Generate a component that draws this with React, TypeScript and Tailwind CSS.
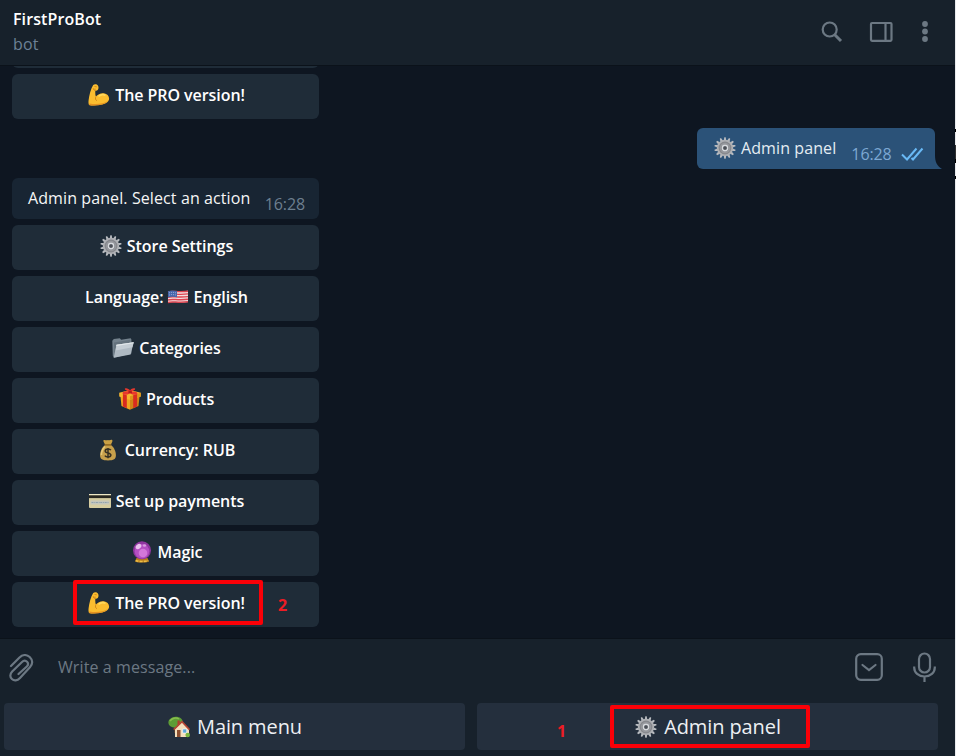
import React from 'react'

const Gear = () => (
  <svg width="22" height="22" viewBox="0 0 22 22">
    {Array.from({ length: 14 }, (_, i) => (
      <path key={i} d="M9.700 3.600 10.300.3h1.400l.6 3.300z" fill="#b9bcc1" transform={`rotate(${(i * 360) / 14} 11 11)`} />
    ))}
    <circle cx="11" cy="11" r="8.200" fill="#aeb0b4" />
    <circle cx="11" cy="11" r="6.400" fill="#85878c" />
    <circle cx="11" cy="11" r="5.200" fill="#96989d" />
    <circle cx="11" cy="11" r="3.600" fill="#696c72" />
    <circle cx="11" cy="11" r="2.700" fill="none" stroke="#d7dade" strokeWidth="1.400" />
    <circle cx="11" cy="11" r="1.500" fill="#4b5058" />
  </svg>
)

const Muscle = () => (
  <svg width="22" height="22" viewBox="0 0 22 22">
    <path
      d="M5.2.9C6.7-.2 9 .2 9.9 1.4c.8 1.2.8 3.2 0 4.4-.6.8-1.8 1-2.5.8-.3 2.2-.1 4.4.5 6 2-2.4 5-3.8 8-3.3 3.3.5 5.3 2.8 5.2 5.4-.2 3.4-4 5.4-8.3 6.1-4 .7-8.6.9-11.2.4C.5 20.9.3 18.7.6 16.3 1.1 11.2 2.8 4.8 5.2.9z"
      fill="#fbbd2f"
    />
    <path d="M1.5 19.4c6 1.3 14.5.6 18.7-2.7-1.9 3-8.2 4.700-13.500 4.700-2.500 0-5.300 0-5.700-1z" fill="#e39020" />
    <path d="M7.3 6.6c-1.2-.1-1.900-1-2-2 .8.8 1.800.7 2.600.5M7.900 12.600c-.9 1.700-.4 3.300.9 4.200M6.500 2.500l2.300.4" fill="none" stroke="#cf8519" strokeWidth=".9" />
    <path d="M10.5 12.3c2-1.600 5-2.100 7-.9" fill="none" stroke="#ffd85c" strokeWidth="1.600" />
  </svg>
)

const Flag = () => (
  <svg width="22" height="22" viewBox="0 0 22 22">
    <path d="M1 5.500c5-1.700 9 .8 20-.7v11.200c-9 1.800-14-.8-20 .8z" fill="#f0dfe0" />
    <path
      d="M1 5.900c5-1.700 9 .8 20-.7M1 8.600c5-1.700 9 .8 20-.7M1 11.300c5-1.700 9 .8 20-.7M1 14c5-1.700 9 .8 20-.7M1 16.500c5-1.700 9 .8 20-.7"
      stroke="#dc4450"
      strokeWidth="1.400"
      fill="none"
    />
    <path d="M1 5.300c3.300-1.200 6-.6 9-.3v6.200c-3-.6-6-.8-9 .2z" fill="#4666ab" />
    <path d="M2 6.900c3-1 5-.4 7.500 0M2 9.100c3-1 5-.4 7.500 0" stroke="#b9c7e6" strokeWidth=".7" strokeDasharray="1 1" fill="none" />
  </svg>
)

const Folder = () => (
  <svg width="22" height="22" viewBox="0 0 22 22">
    <path d="M.3 3.800 1.800 2.100l6-.9 1.400 1.500 9.400-1.500.8 1.200v14L2 20.800.8 19z" fill="#74828d" />
    <path d="M2 5.500 18.400 2.700v11L2.400 18z" fill="#64727d" />
    <path d="M4.500 7.800 21.700 5.200 18.600 17.400 1.700 20.800z" fill="#aeb9c2" />
    <path d="M4.500 7.800 21.700 5.200l-1.300 5L3.600 13.500z" fill="#c4cdd4" />
    <path d="M4.500 7.800 21.700 5.200l-.2 1L4.300 8.900z" fill="#e3e8eb" />
  </svg>
)

const Gift = () => (
  <svg width="22" height="22" viewBox="0 0 22 22">
    <path d="M1.300 7 11 10v11.700L2.500 18z" fill="#f2a51f" />
    <path d="M20.700 7 11 10v11.700l8.500-3.700z" fill="#d08417" />
    <path d="M.2 4.700 11 2l10.800 2.700v3.700L11 11.800.2 8.400z" fill="#f5b52d" />
    <path d="m11 8.200 10.800-3.500v3.700L11 11.800z" fill="#dc951b" />
    <path d="m3.900 5.900 3.900 1.300v13.100l-3.900-1.700zM18.100 5.900l-3.900 1.300v13.100l3.900-1.700z" fill="#d92b20" />
    <path d="M11 5.200C8 7.300 4.300 7.400 3.500 5.300 3.100 3.600 7.500 3 10 3.600 8 2.500 5 1.500 6 .5 7.400-.4 10 .8 11 2.400 12.200.7 15-.4 16 .6c.9 1-1.700 2-3.700 3 2.700-.5 6.700.2 6.200 1.900-.8 2-4.800 1.600-7.500-.3z" fill="#e8382d" />
    <path d="m9.600 2.600 3-.1.500 2.700-3.700.1z" fill="#b51b1d" />
  </svg>
)

const MoneyBag = () => (
  <svg width="22" height="22" viewBox="0 0 22 22">
    <path d="M7.200 6C6.500 4 4.800 2 5.500 1.200 7 .4 8 2 10 1c1.900.9 3-.8 4.300.2.700.8-.8 2.800-1.500 4.800z" fill="#c9a044" />
    <path d="M7 6h6c3 2.300 5 6.700 4.900 10.500-.1 3.600-2.200 4.900-7.900 4.900s-7.800-1.300-7.900-4.900C2 12.700 4 8.300 7 6z" fill="#c7a04b" />
    <path d="M7 7.500c-2 2-3.600 5.500-3.600 8.400" stroke="#e7c979" strokeWidth="1.600" fill="none" />
    <path d="M6.600 5.900h6.800" stroke="#8c6520" strokeWidth="1.500" />
    <path d="M12.900 11.200c-1.200-1.800-5.700-1.700-5.700.8 0 2.600 5.700 1.500 5.700 4.100 0 2.400-4.900 2.500-6 .5M10 9v10.300" stroke="#363023" strokeWidth="1.500" fill="none" />
  </svg>
)

const Card = () => (
  <svg width="22" height="22" viewBox="0 0 22 22">
    <rect y="4" width="22" height="14" rx="1" fill="#d6cda0" />
    <rect y="4" width="22" height="1.500" fill="#eee8c5" />
    <rect y="5.300" width="22" height="2.800" fill="#29271f" />
    <rect x="1.500" y="10.500" width="19" height="4" fill="#c4c6bc" />
    <path d="M2.500 12.500h17" stroke="#8fa2ad" strokeWidth="1.200" strokeDasharray="2 .8 1 .6" />
  </svg>
)

const Crystal = () => (
  <svg width="22" height="22" viewBox="0 0 22 22">
    <path d="M5.500 17h11l1.500 3.400c-3 1.600-11 1.600-14 0z" fill="#b57a1d" />
    <circle cx="11" cy="9.300" r="9" fill="#8f369f" />
    <circle cx="11" cy="10.300" r="7.300" fill="#b44fc2" />
    <circle cx="12" cy="12" r="4.300" fill="#d377d9" />
    <ellipse cx="7.500" cy="5.500" rx="3.200" ry="2.300" fill="#e9c2ee" transform="rotate(-40 7.500 5.500)" />
    <ellipse cx="13.500" cy="4.500" rx="1.700" ry="1.200" fill="#d99be0" />
    <path d="M4.700 19.500c3.500 1.300 9 1.300 12.600 0" stroke="#edbf45" strokeWidth="1.700" fill="none" strokeDasharray="3 1" />
  </svg>
)

const House = () => (
  <svg width="22" height="22" viewBox="0 0 22 22">
    <path d="M6.500 8h2v9h-2z" fill="#7a4b25" />
    <path d="M.4 6.800C.2 3.900 3.400.9 7.500.8c4.200-.1 7.200 2 7.300 5.400.1 3-3.200 5.500-7.400 5.500S.6 9.700.4 6.800z" fill="#5d9c36" />
    <path d="M2 5c2-3 6-3.700 9-2.200" stroke="#87bd4d" strokeWidth="1.500" fill="none" />
    <path d="M9.500 4.500h2.200v5H9.500z" fill="#b23c2e" />
    <path d="M7 13 14 6l7 7v8H7z" fill="#f4dfbd" />
    <path d="M5.700 13.600 14 5.600l7.500 8" stroke="#b54534" strokeWidth="1.600" fill="none" />
    <path d="M9 14h3.500v7H9z" fill="#8c4e2e" />
    <path d="M14.700 13h4v4h-4z" fill="#5ca6d9" stroke="#fff" strokeWidth=".6" />
    <circle cx="19.700" cy="19" r="2.300" fill="#78b73f" />
  </svg>
)

interface ActionProps {
  icon?: React.ReactNode
  label: React.ReactNode
  children?: React.ReactNode
}

const Action = ({ icon, label, children }: ActionProps) => (
  <button
    type="button"
    className="relative flex h-[45px] w-full shrink-0 items-center justify-center gap-[5px] rounded-md bg-[#1f2c38] pb-[3px] pl-[2px] text-[16px] font-semibold tracking-[-0.06px] text-white">
    {icon}
    <span className="flex items-center gap-1 whitespace-nowrap">{label}</span>
    {children}
  </button>
)

const actions = [
  { id: 'settings', icon: <Gear />, label: 'Store Settings' },
  {
    id: 'language',
    label: (
      <>
        Language: <Flag /> English
      </>
    ),
  },
  { id: 'categories', icon: <Folder />, label: 'Categories' },
  { id: 'products', icon: <Gift />, label: 'Products' },
  { id: 'currency', icon: <MoneyBag />, label: 'Currency: RUB' },
  { id: 'payments', icon: <Card />, label: 'Set up payments' },
  { id: 'magic', icon: <Crystal />, label: 'Magic' },
]

const Header = () => (
  <header className="flex h-[66px] shrink-0 justify-between border-b border-[#0b121a] bg-[#17212b]">
    <div className="pl-[13px] pt-[7px]">
      <h1 className="text-[16px] font-semibold leading-6 tracking-[0.1px] text-white">FirstProBot</h1>
      <p className="text-[16px] leading-[26px] tracking-[0.2px] text-[#6d8197]">bot</p>
    </div>
    <div className="flex items-center pb-px pr-[26px] text-[#6c7883]">
      <svg width="22" height="22" viewBox="0 0 22 22" fill="none" stroke="currentColor" className="mr-[26px]">
        <circle cx="8.700" cy="8.500" r="7" strokeWidth="2.200" />
        <path d="m13.500 13.500 6.500 6.500" strokeWidth="3" />
      </svg>
      <svg width="24" height="22" viewBox="0 0 24 22" fill="none" stroke="currentColor" strokeWidth="2.200" className="mr-[28px]">
        <rect x="2" y="2" width="20.500" height="17.800" rx="1" />
        <path d="M16.500 2v18" />
      </svg>
      <svg width="8" height="22" viewBox="0 0 8 22" fill="currentColor">
        <circle cx="4" cy="3" r="2.900" />
        <circle cx="4" cy="10.500" r="2.900" />
        <circle cx="4" cy="18" r="2.900" />
      </svg>
    </div>
  </header>
)

const Messages = () => (
  <main className="flex flex-1 flex-col overflow-hidden bg-[#0e1621] pl-3">
    <div className="-mt-[10px] h-3 w-[307px] shrink-0 rounded-b-md bg-[#1f2c38]" />
    <div className="mt-1.5 w-[307px]">
      <Action icon={<Muscle />} label="The PRO version!" />
    </div>

    <div className="relative mr-5 mt-[9px] flex h-[41px] w-[238px] shrink-0 self-end rounded-md rounded-br-none bg-[#2b5278] pl-[17px] text-[16px]">
      <div className="flex items-center gap-[5px] pb-px tracking-[0.1px] text-[#e4ecf2]">
        <Gear />
        <span className="whitespace-nowrap">Admin panel</span>
      </div>
      <span className="ml-[15px] mt-[14px] w-10 leading-6 tracking-[-0.1px] text-[#7da8d3]">16:28</span>
      <svg width="23" height="14" viewBox="0 0 23 14" fill="none" stroke="#69b9f5" strokeWidth="2" className="ml-[10px] mt-[19px] shrink-0">
        <path d="m1 7.500 5 5L15.500 1.500M10.500 11l1.500 1.500L21.500 1.500" />
      </svg>
      <svg width="7" height="14" viewBox="0 0 7 14" fill="#2b5278" className="absolute -right-[7px] bottom-0">
        <path d="M0 0c0 7 2 11 7 14H0z" />
      </svg>
    </div>

    <div className="mt-[9px] flex w-[307px] flex-col gap-1.5">
      <div className="flex h-[41px] justify-between rounded-md bg-[#182533] pl-4 pr-[14px] text-[16px] leading-6">
        <span className="pt-[8px] tracking-[0.1px] text-[#f5f5f5]">Admin panel. Select an action</span>
        <span className="pt-[14px] tracking-[-0.1px] text-[#6d7f8f]">16:28</span>
      </div>
      {actions.map((action) => (
        <Action key={action.id} icon={action.icon} label={action.label} />
      ))}
      <Action icon={<Muscle />} label="The PRO version!">
        <span className="absolute -top-[2px] left-[61px] h-[45px] w-[190px] rounded-xs border-4 border-[#fb0007]" />
        <span className="absolute left-[266px] top-[11px] text-[16px] font-bold text-[#ed1c24]">2</span>
      </Action>
    </div>
  </main>
)

const Composer = () => (
  <footer className="h-[118px] shrink-0 border-t border-[#0b121a] bg-[#17212b]">
    <div className="flex h-[64px] items-center pb-[9px] pl-[9px] pr-[19px] text-[#6c7883]">
      <svg width="25" height="28" viewBox="0 0 25 28" fill="none" stroke="currentColor" strokeWidth="2.200" strokeLinecap="round" className="mt-[2px]">
        <path d="M2 12 10.500 3.500c3.300-3.300 7.400-3 10.200-.5 3.200 3 3.300 7 .2 10.200L11 24c-2.800 3-6 3-8.100 1-2.200-2-2-5 .3-7.500L13 8c1.700-1.700 3.800-1.500 5.100-.2 1.200 1.300 1.200 3.200-.3 4.700L9.500 20" />
      </svg>
      <span className="ml-6 flex-1 text-[16px] tracking-[0.1px]">Write a message...</span>
      <svg width="28" height="28" viewBox="0 0 28 28" fill="none" stroke="currentColor" strokeWidth="2.200">
        <rect x="1.200" y="1.200" width="25.600" height="25.600" rx="4.500" />
        <path d="m7.500 12 6.500 5 6.500-5" strokeLinecap="round" />
      </svg>
      <svg width="23" height="30" viewBox="0 0 23 30" fill="none" stroke="currentColor" strokeWidth="2.200" className="ml-[30px]">
        <rect x="6" y="1.500" width="11" height="19" rx="5.500" />
        <path d="M1.200 14.500v1c0 5 4.300 9 10.300 9s10.300-4 10.300-9v-1M11.500 24.500V30" />
      </svg>
    </div>
    <div className="flex gap-3 px-1 text-[20px] tracking-[-0.1px] text-[#edf0f3]">
      <button type="button" className="flex h-[47px] w-[461px] items-center justify-center gap-[7px] rounded-sm bg-[#242f3d] pl-px">
        <House />
        <span>Main menu</span>
      </button>
      <button type="button" className="relative flex h-[47px] w-[461px] items-center justify-center gap-[7px] rounded-sm bg-[#242f3d] pl-px">
        <Gear />
        <span>Admin panel</span>
        <span className="absolute left-[133px] top-[2px] h-[43px] w-[200px] rounded-xs border-4 border-[#fb0007]" />
        <span className="absolute left-[80px] top-[16px] text-[16px] font-bold leading-6 text-[#ed1c24]">1</span>
      </button>
    </div>
  </footer>
)

const App = () => (
  <div className="flex h-[756px] w-[956px] overflow-hidden bg-white font-['Open_Sans',sans-serif]">
    <div className="flex w-[955px] shrink-0 flex-col">
      <Header />
      <Messages />
      <Composer />
    </div>
    <div className="flex flex-1 flex-col bg-[#e8eaed]">
      <div className="mt-[129px] h-[3px] bg-black" />
      <div className="mt-[13px] h-[14px] bg-[#333333]" />
      <div className="h-1 bg-black" />
      <div className="mt-[13px] h-[3px] bg-black" />
    </div>
  </div>
)

export default App
